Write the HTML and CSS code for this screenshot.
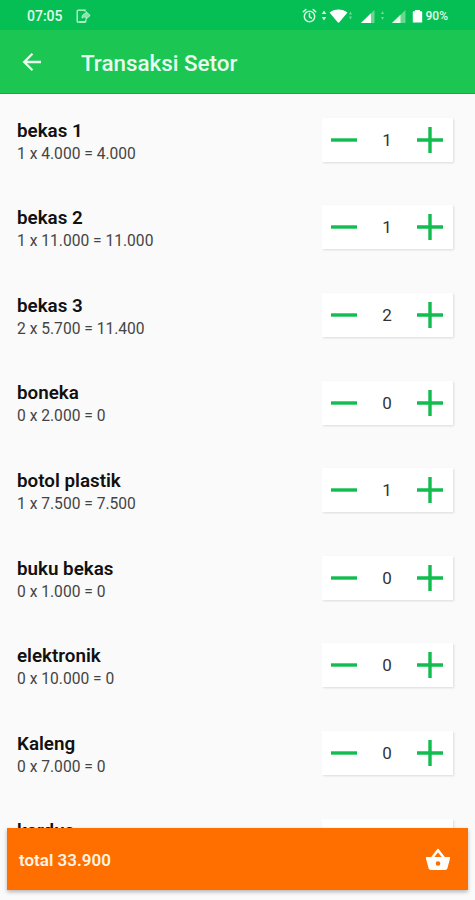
FILE: index.html
```html
<!DOCTYPE html>
<html lang="id">
<head>
<meta charset="UTF-8" />
<meta name="viewport" content="width=device-width, initial-scale=1" />
<title>Transaksi Setor</title>
<link rel="stylesheet" href="styles.css">
</head>
<body>
  <div class="screen">
    <div class="status-bar">
      <span class="time">07:05</span>
      <svg class="note-icon" width="15" height="15" viewBox="0 0 15 15" fill="none" stroke="#c9f5d6" stroke-width="1.3">
        <path d="M9 2.5V1.2H2.2C1.6 1.2 1.2 1.6 1.2 2.2v10c0 .6.4 1 1 1h6.600c.6 0 1-.4 1-1V10.500" />
        <path d="M3.500 12.800h5.500" />
        <path d="M6 9.200c0-3.400 1.500-4.600 4-4.600V2.600l4.200 3.800L10 10.200V8c-2 0-3 .2-4 1.200z" fill="#c9f5d6" fill-opacity=".65" stroke-width=".8" />
      </svg>

      <svg class="status-icons" width="122" height="18" viewBox="0 0 122 18">
        <!-- alarm -->
        <g fill="none" stroke="#d5f8df" stroke-width="1.5" stroke-linecap="round">
          <circle cx="7.500" cy="9.500" r="5.200" />
          <path d="M7.500 6.500v3.300l2 1.300M1.300 4.800l2.500-2.200M13.700 4.800l-2.500-2.200" />
        </g>
        <!-- wifi -->
        <path d="M22 3.500l2.300 3.500h-4.600zM22 13.500l2.300-3.500h-4.600z" fill="#d5f8df" />
        <path d="M27.500 5.500c5-4 13-4 18 0l-8.200 9.800c-.4.500-1.200.5-1.600 0z" fill="#fff" />
        <path d="M48.500 4.500l1.500 3h-3zM48.500 12.500l1.500-3h-3z" fill="#6fdc93" />
        <!-- signal -->
        <path d="M72.500 3v13H59z" fill="#66d98c" />
        <path d="M69 6.300V16H59z" fill="#fff" />
        <path d="M80.500 4l1.500 3h-3zM80.500 13l1.500-3h-3z" fill="#6fdc93" />
        <path d="M103.500 3v13H90z" fill="#66d98c" />
        <path d="M98.500 7.800V16H90z" fill="#e4fbea" />
        <!-- battery -->
        <path d="M113 3h5v1.200h1.500c.4 0 .7.300.7.700v10c0 .4-.3.700-.7.700h-8c-.4 0-.7-.3-.7-.7v-10c0-.4.300-.7.700-.7h1.500z" fill="#fff" />
      </svg>
      <span class="battery">90%</span>
    </div>

    <div class="app-bar">
      <button class="back" aria-label="Kembali">
        <svg width="20" height="20" viewBox="0 0 20 20" fill="none" stroke="#e9fdef" stroke-width="2.300">
          <path d="M19 10H2.500M10.500 1.700L2.200 10l8.300 8.300" />
        </svg>
      </button>
      <h1>Transaksi Setor</h1>
    </div>

    <div class="list" id="list"></div>

    <div class="total-bar">
      <span id="total"></span>
      <svg width="26" height="24" viewBox="0 0 26 24">
        <path d="M7 10L13 2.200 19 10" fill="none" stroke="#fff" stroke-width="2.600" stroke-linejoin="round" />
        <path fill="#fff" fill-rule="evenodd" d="M2 9h22c.8 0 1.300.6 1.100 1.300l-2.700 10c-.3 1-1.200 1.700-2.200 1.700H5.800c-1 0-1.900-.7-2.200-1.700l-2.700-10C.7 9.600 1.200 9 2 9zm11 4.200a2.300 2.300 0 1 0 0 4.600 2.300 2.300 0 0 0 0-4.600z" />
      </svg>
    </div>
  </div>

<script>
  const items = [
    { name: "bekas 1", price: 4000, qty: 1 },
    { name: "bekas 2", price: 11000, qty: 1 },
    { name: "bekas 3", price: 5700, qty: 2 },
    { name: "boneka", price: 2000, qty: 0 },
    { name: "botol plastik", price: 7500, qty: 1 },
    { name: "buku bekas", price: 1000, qty: 0 },
    { name: "elektronik", price: 10000, qty: 0 },
    { name: "Kaleng", price: 7000, qty: 0 },
    { name: "kardus", price: 3000, qty: 0 }
  ];

  const list = document.getElementById("list");
  const total = document.getElementById("total");

  // 11000 -> 11.000
  function rupiah(n) {
    return String(n).replace(/\B(?=(\d{3})+$)/g, ".");
  }

  function render() {
    list.innerHTML = items.map((item, i) => `
      <div class="item">
        <div class="info">
          <h2>${item.name}</h2>
          <p>${item.qty} x ${rupiah(item.price)} = ${rupiah(item.qty * item.price)}</p>
        </div>
        <div class="stepper">
          <button data-index="${i}" data-step="-1" aria-label="Kurangi">
            <svg width="28" height="28" viewBox="0 0 28 28"><path d="M1 14h26" /></svg>
          </button>
          <span class="qty">${item.qty}</span>
          <button data-index="${i}" data-step="1" aria-label="Tambah">
            <svg width="28" height="28" viewBox="0 0 28 28"><path d="M1 14h26M14 1v26" /></svg>
          </button>
        </div>
      </div>
    `).join("");

    const sum = items.reduce((acc, item) => acc + item.qty * item.price, 0);
    total.textContent = `total ${rupiah(sum)}`;
  }

  list.addEventListener("click", (e) => {
    const btn = e.target.closest("button");
    if (!btn) return;
    const item = items[btn.dataset.index];
    item.qty = Math.max(0, item.qty + Number(btn.dataset.step));
    render();
  });

  render();
</script>
</body>
</html>
```
FILE: styles.css
```css
body {
  font-family: Roboto, "Liberation Sans", sans-serif;
  background: #fafafa;
  color: #111;
  margin: 0;
}
h1, h2, p {
  margin: 0;
}
button {
  background: none;
  border: none;
  padding: 0;
  cursor: pointer;
  display: flex;
}
.screen {
  height: 100vh;
  overflow: hidden;
  display: flex;
  flex-direction: column;
}
.status-bar {
  flex: none;
  display: flex;
  align-items: center;
  height: 30px;
  padding: 2px 27px 0;
  box-sizing: border-box;
  background: #05bf55;
  color: #e0fbe8;
}
.time {
  font-size: 14px;
  font-weight: 500;
}
.note-icon {
  margin-left: 13px;
}
.status-icons {
  margin-left: auto;
  margin-right: 2px;
}
.battery {
  font-size: 12px;
  font-weight: 500;
}
.app-bar {
  flex: none;
  display: flex;
  align-items: center;
  height: 64px;
  padding-left: 22px;
  box-sizing: border-box;
  background: #1bc653;
  border-bottom: 1px solid #12ab4d;
}
.app-bar h1 {
  margin-left: 39px;
  padding-top: 2px;
  font-size: 22.4px;
  font-weight: 500;
  color: #e9fdef;
}
.list {
  flex: 1;
  min-height: 0;
  overflow: hidden;
  padding-top: 2px;
}
.item {
  display: flex;
  align-items: center;
  justify-content: space-between;
  height: 87.6px;
  padding: 0 22px 0 17px;
}
.info {
  padding-top: 3.5px;
}
.info h2 {
  font-size: 18.8px;
  line-height: 24px;
  font-weight: 600;
}
.info p {
  font-size: 15.6px;
  line-height: 22px;
  color: #444;
}
.stepper {
  display: flex;
  align-items: center;
  justify-content: space-between;
  width: 131px;
  height: 44px;
  padding: 0 9px 0 8px;
  box-sizing: border-box;
  background: #fff;
  box-shadow: 1px 1px 2px rgba(0,0,0,0.12);
}
.stepper path {
  fill: none;
  stroke: #12bd50;
  stroke-width: 3.4;
}
.qty {
  font-size: 17px;
  color: #333;
}
.total-bar {
  position: relative;
  flex: none;
  margin: 0 7px 10px;
  height: 62px;
  display: flex;
  align-items: center;
  justify-content: space-between;
  padding: 2px 17px 0 12px;
  box-sizing: border-box;
  background: #ff6f00;
  color: #fff3e4;
  font-size: 17px;
  font-weight: 600;
  box-shadow: 0 2px 4px rgba(0,0,0,0.28);
}
```
